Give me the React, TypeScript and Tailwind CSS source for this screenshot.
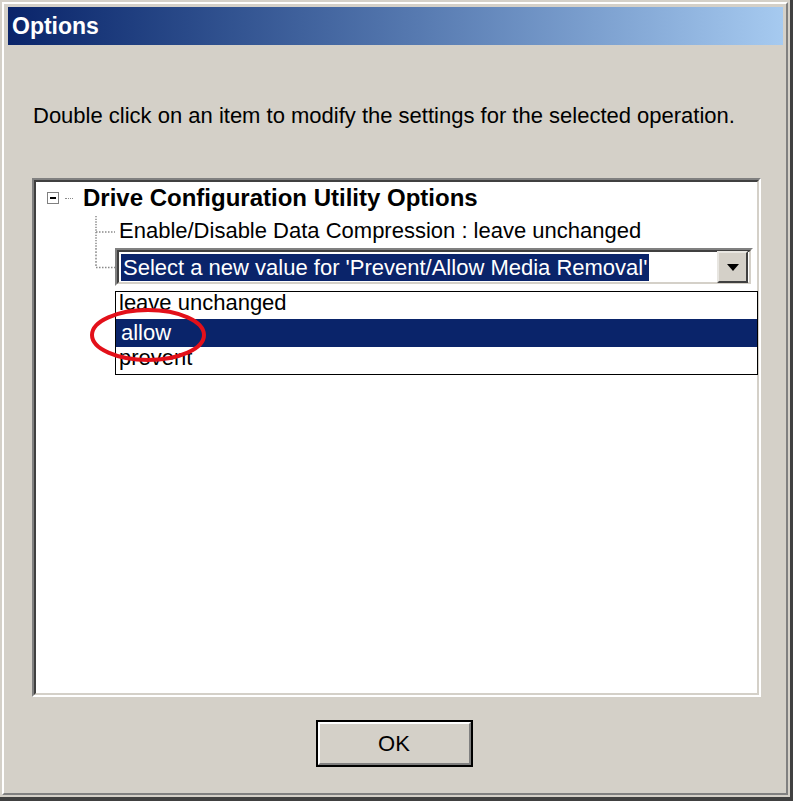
import React from 'react';

const font = "font-['Liberation_Sans',Arial,sans-serif]";

function TreeGutter({ last }: { last?: boolean }) {
    // dotted tree connector lines
    return (
        <svg width="20" height="36" className="shrink-0 self-stretch" style={{ height: '100%' }} viewBox="0 0 20 36" preserveAspectRatio="none">
            <line x1="1" y1="0" x2="1" y2={last ? 18 : 36} stroke="#8a8a8a" strokeWidth="1.5" strokeDasharray="1.5 1.5" />
            <line x1="1" y1="18" x2="20" y2="18" stroke="#8a8a8a" strokeWidth="1.5" strokeDasharray="1.5 1.5" />
        </svg>
    );
}

export default function App() {
    return (
        <div className={`w-[793px] h-[801px] bg-[#d4d0c8] p-[2px] border-r-[3px] border-b-[4px] border-[#404040] ${font}`}>
            <div className="h-full border-l-2 border-t-2 border-white border-r-2 border-b-2 border-r-[#808080] border-b-[#808080] pl-[4px] pt-[3px] pr-[3px]">
                {/* Title bar */}
                <div className="h-[38px] flex items-center pl-[4px] bg-gradient-to-r from-[#0a246a] to-[#a6caf0]">
                    <span className="text-white font-bold text-[23px] leading-none">Options</span>
                </div>

                <p className="mt-[58px] ml-[25px] text-[22px] leading-[26px] text-black whitespace-nowrap">
                    Double click on an item to modify the settings for the selected operation.
                </p>

                {/* Tree view */}
                <div className="mt-[49px] ml-[24px] w-[729px] h-[519px] border-2 border-t-[#808080] border-l-[#808080] border-r-white border-b-white">
                    <div className="relative h-full bg-white border-2 border-t-[#404040] border-l-[#404040] border-r-[#d4d0c8] border-b-[#d4d0c8] pt-[2px]">
                        <div className="flex items-center h-[28px]">
                            <div className="ml-[11px] w-[12px] h-[12px] border border-[#808080] bg-white flex items-center justify-center">
                                <div className="w-[6px] h-[1.5px] bg-black" />
                            </div>
                            <div className="w-[8px] ml-[6px] border-t-[1.5px] border-dotted border-[#8a8a8a]" />
                            <span className="ml-[10px] text-[24px] font-bold leading-[28px] text-black">Drive Configuration Utility Options</span>
                        </div>

                        <div className="ml-[59px] mt-[4px]">
                            <div className="flex h-[32px]">
                                <TreeGutter />
                                <span className="pl-[4px] text-[22px] leading-[30px] text-black whitespace-nowrap">
                                    Enable/Disable Data Compression : leave unchanged
                                </span>
                            </div>
                            <div className="flex h-[39px]">
                                <TreeGutter last />
                                <div className="relative">
                                    <div className="w-[638px] h-[38px] border-2 border-t-[#808080] border-l-[#808080] border-r-white border-b-white">
                                        <div className="h-full bg-white border-2 border-t-[#404040] border-l-[#404040] border-r-[#d4d0c8] border-b-[#d4d0c8] flex items-center pl-[2px] pr-[1px]">
                                            <span className="bg-[#0a246a] text-white text-[22px] leading-[27px] px-[2px] whitespace-nowrap">
                                                Select a new value for 'Prevent/Allow Media Removal'
                                            </span>
                                            <div className="ml-auto w-[31px] h-[32px] bg-[#d4d0c8] border-2 border-t-[#e8e6e1] border-l-[#e8e6e1] border-r-[#404040] border-b-[#404040] flex items-center justify-center">
                                                <svg width="12" height="7" viewBox="0 0 12 7"><path d="M0 0h12L6 7z" fill="#000" /></svg>
                                            </div>
                                        </div>
                                    </div>

                                    {/* Dropdown list */}
                                    <div className="absolute left-0 top-[43px] w-[643px] h-[84px] bg-white border-[1.5px] border-black z-10">
                                        <div className="h-[27px] pl-[3px] text-[22px] leading-[22px] text-black">leave unchanged</div>
                                        <div className="h-[28px] pl-[5px] text-[22px] leading-[28px] text-white bg-[#0a246a]">allow</div>
                                        <div className="h-[27px] pl-[3px] text-[22px] leading-[22px] text-black">prevent</div>
                                    </div>
                                </div>
                            </div>
                        </div>

                        {/* Red highlight ellipse */}
                        <svg className="absolute left-[52px] top-[125px] z-20" width="120" height="56" viewBox="0 0 120 56">
                            <ellipse cx="60" cy="28" rx="56" ry="25" fill="none" stroke="#e3101a" strokeWidth="4" />
                        </svg>
                    </div>
                </div>

                {/* OK button */}
                <div className="mt-[23px] flex justify-center pr-[3px]">
                    <button className="w-[157px] h-[47px] border-2 border-black bg-[#d4d0c8]">
                        <div className="h-full border-2 border-t-white border-l-white border-r-[#808080] border-b-[#808080] flex items-center justify-center text-[22px] text-black">
                            OK
                        </div>
                    </button>
                </div>
            </div>
        </div>
    );
}
